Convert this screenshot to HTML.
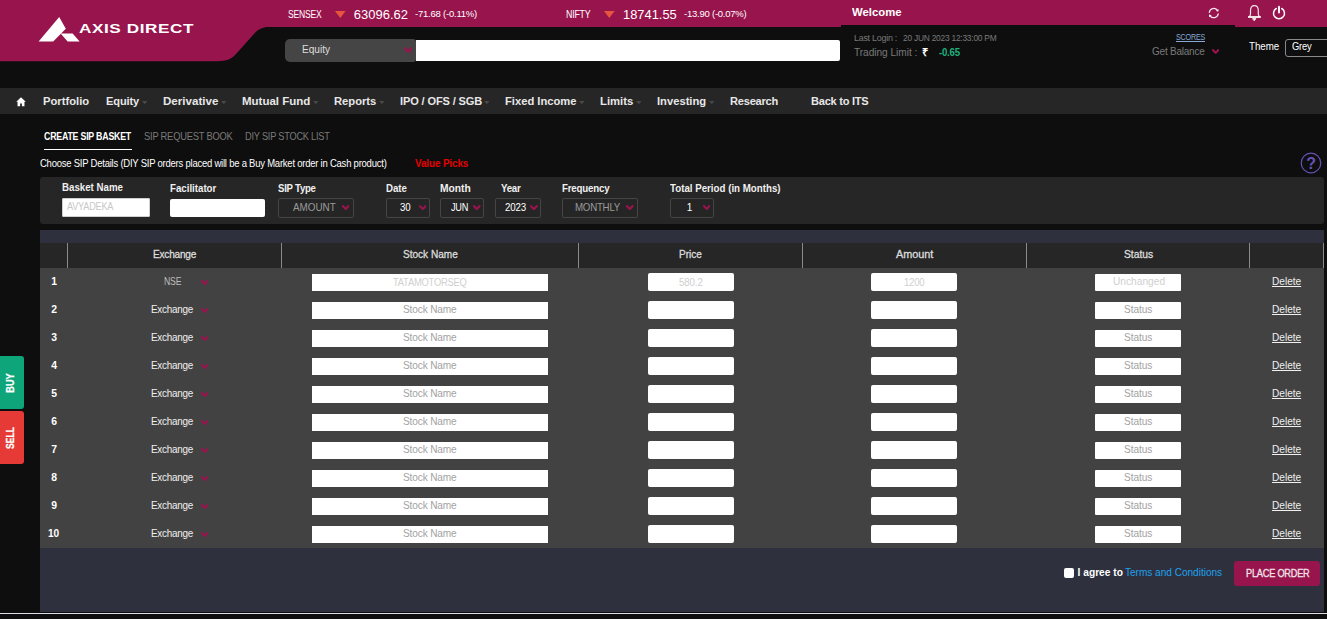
<!DOCTYPE html>
<html lang="en"><head><meta charset="utf-8"><title>Axis Direct - Create SIP Basket</title>
<style>
html,body{margin:0;padding:0;}
body{width:1327px;height:619px;overflow:hidden;background:#0e0e0e;font-family:"Liberation Sans", sans-serif;position:relative;}
.b{position:absolute;display:block;}
.t{position:absolute;white-space:nowrap;line-height:1;transform-origin:0 50%;}
</style></head>
<body>
<div class="b" style="left:0px;top:0px;width:1327.00px;height:27.00px;background:#97144d;"></div>
<div class="b" style="left:841px;top:25px;width:394.00px;height:2.00px;background:#0e0e0e;"></div>
<svg class="b" style="left:0;top:0" width="290" height="62" viewBox="0 0 290 62"><path d="M0 0 H290 V26.6 H276 C265 26.6 260.5 27.6 255.3 32.6 L236 54 C231.5 59 227 61.2 217 61.2 H0 Z" fill="#97144d"/></svg>
<svg class="b" style="left:38px;top:16px" width="43" height="27" viewBox="0 0 43 27"><path d="M21.2 1 L27.8 12.8 L15.2 25.6 L0.6 25.6 Z" fill="#fff"/><path d="M22.6 17.6 L34.6 17.6 L41.6 25.6 L29.6 25.6 Z" fill="#fff"/></svg>
<div class="b" style="left:415.5px;top:39.7px;width:424.80px;height:21.40px;background:#fff;border-radius:0 2px 2px 0;"></div>
<div class="b" style="left:285px;top:39px;width:130.80px;height:22.60px;background:#454545;border-radius:5px 3px 3px 5px;"></div>
<svg class="b" style="left:403.6px;top:46.89px" width="8.90" height="6.23" viewBox="0 0 10 7"><path d="M1.3 1.5 L5 5.3 L8.7 1.5" fill="none" stroke="#97144d" stroke-width="2.9" stroke-linecap="round" stroke-linejoin="round"/></svg>
<svg class="b" style="left:335px;top:10.6px" width="10.6" height="7" viewBox="0 0 10.6 7"><path d="M0 0 H10.6 L5.3 7 Z" fill="#e8553f"/></svg>
<svg class="b" style="left:604.2px;top:10.6px" width="10.6" height="7" viewBox="0 0 10.6 7"><path d="M0 0 H10.6 L5.3 7 Z" fill="#e8553f"/></svg>
<svg class="b" style="left:1206px;top:5px" width="16" height="16" viewBox="0 0 16 16" fill="none" stroke="#f6e4ec" stroke-width="1.25" stroke-linecap="round"><path d="M3.3 7.3 A4.5 4.5 0 0 1 11.4 5.4"/><path d="M12.2 8.9 A4.5 4.5 0 0 1 4.1 10.8"/><path d="M12.5 3.9 L12.4 6.6 L9.9 5.9 Z" fill="#fff" stroke="none"/><path d="M3.0 12.3 L3.1 9.6 L5.6 10.3 Z" fill="#fff" stroke="none"/></svg>
<svg class="b" style="left:1246px;top:3px" width="17" height="19" viewBox="0 0 17 19" fill="none" stroke="#f6e4ec" stroke-width="1.2" stroke-linejoin="round" stroke-linecap="round"><path d="M8.4 2.6 C5.6 2.6 4.5 4.9 4.5 7.6 V11.2 C4.5 12.4 3.6 13.3 2.6 14 H14.2 C13.200 13.3 12.3 12.4 12.3 11.2 V7.6 C12.3 4.9 11.200 2.6 8.4 2.6 Z"/><path d="M2.6 14 H14.2" stroke="#fff" stroke-width="1.5"/><path d="M6.9 15.6 H9.9 L8.4 17.5 Z" fill="#fff" stroke="#fff" stroke-width="0.8"/></svg>
<svg class="b" style="left:1271px;top:4px" width="17" height="17" viewBox="0 0 17 17" fill="none" stroke="#fff" stroke-linecap="round"><path d="M5.3 4.5 A5.5 5.5 0 1 0 10.7 4.5" stroke-width="1.5"/><path d="M8 2.6 V8.6" stroke-width="1.9"/></svg>
<div class="b" style="left:1175.8px;top:41px;width:29.40px;height:1.00px;background:#86a9d6;"></div>
<svg class="b" style="left:1212px;top:49.05px" width="7.30" height="5.11" viewBox="0 0 10 7"><path d="M1.3 1.5 L5 5.3 L8.7 1.5" fill="none" stroke="#97144d" stroke-width="2.9" stroke-linecap="round" stroke-linejoin="round"/></svg>
<div class="b" style="left:1285px;top:39px;width:50.00px;height:17.80px;background:transparent;border:1px solid #8a8a8a;border-radius:3px;box-sizing:border-box;"></div>
<div class="b" style="left:0px;top:87.6px;width:1327.00px;height:26.40px;background:#262626;"></div>
<svg class="b" style="left:16px;top:97.4px" width="10" height="9.4" viewBox="0 0 20 19"><path d="M10 0.6 L0.4 9.8 H3 V18.5 H8.2 V13 H11.800 V18.5 H17 V9.8 H19.6 Z" fill="#fff"/></svg>
<svg class="b" style="left:141.5px;top:100.6px" width="5.6" height="3.2" viewBox="0 0 5.6 3.2"><path d="M0 0 H5.6 L2.8 3.2 Z" fill="#484848"/></svg>
<svg class="b" style="left:220.5px;top:100.6px" width="5.6" height="3.2" viewBox="0 0 5.6 3.2"><path d="M0 0 H5.6 L2.8 3.2 Z" fill="#484848"/></svg>
<svg class="b" style="left:312.5px;top:100.6px" width="5.6" height="3.2" viewBox="0 0 5.6 3.2"><path d="M0 0 H5.6 L2.8 3.2 Z" fill="#484848"/></svg>
<svg class="b" style="left:378.5px;top:100.6px" width="5.6" height="3.2" viewBox="0 0 5.6 3.2"><path d="M0 0 H5.6 L2.8 3.2 Z" fill="#484848"/></svg>
<svg class="b" style="left:483.5px;top:100.6px" width="5.6" height="3.2" viewBox="0 0 5.6 3.2"><path d="M0 0 H5.6 L2.8 3.2 Z" fill="#484848"/></svg>
<svg class="b" style="left:578.5px;top:100.6px" width="5.6" height="3.2" viewBox="0 0 5.6 3.2"><path d="M0 0 H5.6 L2.8 3.2 Z" fill="#484848"/></svg>
<svg class="b" style="left:635.5px;top:100.6px" width="5.6" height="3.2" viewBox="0 0 5.6 3.2"><path d="M0 0 H5.6 L2.8 3.2 Z" fill="#484848"/></svg>
<svg class="b" style="left:708.5px;top:100.6px" width="5.6" height="3.2" viewBox="0 0 5.6 3.2"><path d="M0 0 H5.6 L2.8 3.2 Z" fill="#484848"/></svg>
<div class="b" style="left:44px;top:148.6px;width:88.00px;height:1.40px;background:#fff;"></div>
<svg class="b" style="left:1299.5px;top:152px" width="22" height="22" viewBox="0 0 22 22"><circle cx="11" cy="11" r="9.800" fill="none" stroke="#6553b8" stroke-width="1.2"/></svg>
<div class="b" style="left:40.3px;top:177.2px;width:1283.30px;height:46.90px;background:#262626;border-radius:3px;"></div>
<div class="b" style="left:62.3px;top:197.5px;width:87.30px;height:19.10px;background:#fff;border-radius:2px;box-shadow:inset 0 0 0 1px #d0d0d0;"></div>
<div class="b" style="left:170.4px;top:198.6px;width:95.00px;height:18.80px;background:#fff;border-radius:2px;"></div>
<div class="b" style="left:278px;top:198.4px;width:75.60px;height:19.40px;background:#252525;border:1px solid #454545;border-radius:2px;box-sizing:border-box;"></div>
<svg class="b" style="left:341.7px;top:204.97px" width="7.50" height="5.25" viewBox="0 0 10 7"><path d="M1.3 1.5 L5 5.3 L8.7 1.5" fill="none" stroke="#97144d" stroke-width="2.9" stroke-linecap="round" stroke-linejoin="round"/></svg>
<div class="b" style="left:386.2px;top:198.4px;width:43.60px;height:19.40px;background:#252525;border:1px solid #454545;border-radius:2px;box-sizing:border-box;"></div>
<svg class="b" style="left:418.8px;top:204.91px" width="7.70" height="5.39" viewBox="0 0 10 7"><path d="M1.3 1.5 L5 5.3 L8.7 1.5" fill="none" stroke="#97144d" stroke-width="2.9" stroke-linecap="round" stroke-linejoin="round"/></svg>
<div class="b" style="left:440.2px;top:198.4px;width:43.50px;height:19.40px;background:#252525;border:1px solid #454545;border-radius:2px;box-sizing:border-box;"></div>
<svg class="b" style="left:473px;top:204.97px" width="7.50" height="5.25" viewBox="0 0 10 7"><path d="M1.3 1.5 L5 5.3 L8.7 1.5" fill="none" stroke="#97144d" stroke-width="2.9" stroke-linecap="round" stroke-linejoin="round"/></svg>
<div class="b" style="left:495.4px;top:198.4px;width:45.60px;height:19.40px;background:#252525;border:1px solid #454545;border-radius:2px;box-sizing:border-box;"></div>
<svg class="b" style="left:529.8px;top:204.87px" width="7.80" height="5.46" viewBox="0 0 10 7"><path d="M1.3 1.5 L5 5.3 L8.7 1.5" fill="none" stroke="#97144d" stroke-width="2.9" stroke-linecap="round" stroke-linejoin="round"/></svg>
<div class="b" style="left:562px;top:198.4px;width:76.00px;height:19.40px;background:#252525;border:1px solid #454545;border-radius:2px;box-sizing:border-box;"></div>
<svg class="b" style="left:626px;top:204.97px" width="7.50" height="5.25" viewBox="0 0 10 7"><path d="M1.3 1.5 L5 5.3 L8.7 1.5" fill="none" stroke="#97144d" stroke-width="2.9" stroke-linecap="round" stroke-linejoin="round"/></svg>
<div class="b" style="left:670px;top:198.4px;width:43.60px;height:19.40px;background:#252525;border:1px solid #454545;border-radius:2px;box-sizing:border-box;"></div>
<svg class="b" style="left:703px;top:205.01px" width="7.40" height="5.18" viewBox="0 0 10 7"><path d="M1.3 1.5 L5 5.3 L8.7 1.5" fill="none" stroke="#97144d" stroke-width="2.9" stroke-linecap="round" stroke-linejoin="round"/></svg>
<div class="b" style="left:40.3px;top:229.5px;width:1283.30px;height:13.50px;background:#2e303e;"></div>
<div class="b" style="left:40.3px;top:242.8px;width:1283.30px;height:25.20px;background:#262626;"></div>
<div class="b" style="left:67px;top:242.8px;width:1.00px;height:25.20px;background:#8a8a8a;"></div>
<div class="b" style="left:281px;top:242.8px;width:1.00px;height:25.20px;background:#8a8a8a;"></div>
<div class="b" style="left:578px;top:242.8px;width:1.00px;height:25.20px;background:#8a8a8a;"></div>
<div class="b" style="left:802px;top:242.8px;width:1.00px;height:25.20px;background:#8a8a8a;"></div>
<div class="b" style="left:1026px;top:242.8px;width:1.00px;height:25.20px;background:#8a8a8a;"></div>
<div class="b" style="left:1249px;top:242.8px;width:1.00px;height:25.20px;background:#8a8a8a;"></div>
<div class="b" style="left:1323px;top:242.8px;width:1.00px;height:25.20px;background:#8a8a8a;"></div>
<div class="b" style="left:40.3px;top:268px;width:1283.30px;height:280.00px;background:#424242;"></div>
<div class="b" style="left:40.3px;top:548px;width:1283.30px;height:64.00px;background:#2e303e;"></div>
<div class="b" style="left:311.9px;top:274.2px;width:236.30px;height:16.80px;background:#fff;border-radius:0px;"></div>
<div class="b" style="left:647.7px;top:273.4px;width:86.60px;height:17.60px;background:#fff;border-radius:2px;"></div>
<div class="b" style="left:871px;top:273.4px;width:86.40px;height:17.60px;background:#fff;border-radius:2px;"></div>
<div class="b" style="left:1095px;top:274.0px;width:86.40px;height:17.00px;background:#fff;border-radius:1px;"></div>
<svg class="b" style="left:200.6px;top:279.51px" width="7.40" height="5.18" viewBox="0 0 10 7"><path d="M1.3 1.5 L5 5.3 L8.7 1.5" fill="none" stroke="#97144d" stroke-width="2.9" stroke-linecap="round" stroke-linejoin="round"/></svg>
<div class="b" style="left:311.9px;top:302.2px;width:236.30px;height:16.80px;background:#fff;border-radius:0px;"></div>
<div class="b" style="left:647.7px;top:301.4px;width:86.60px;height:17.60px;background:#fff;border-radius:2px;"></div>
<div class="b" style="left:871px;top:301.4px;width:86.40px;height:17.60px;background:#fff;border-radius:2px;"></div>
<div class="b" style="left:1095px;top:302.0px;width:86.40px;height:17.00px;background:#fff;border-radius:1px;"></div>
<svg class="b" style="left:200.6px;top:307.51px" width="7.40" height="5.18" viewBox="0 0 10 7"><path d="M1.3 1.5 L5 5.3 L8.7 1.5" fill="none" stroke="#97144d" stroke-width="2.9" stroke-linecap="round" stroke-linejoin="round"/></svg>
<div class="b" style="left:311.9px;top:330.2px;width:236.30px;height:16.80px;background:#fff;border-radius:0px;"></div>
<div class="b" style="left:647.7px;top:329.4px;width:86.60px;height:17.60px;background:#fff;border-radius:2px;"></div>
<div class="b" style="left:871px;top:329.4px;width:86.40px;height:17.60px;background:#fff;border-radius:2px;"></div>
<div class="b" style="left:1095px;top:330.0px;width:86.40px;height:17.00px;background:#fff;border-radius:1px;"></div>
<svg class="b" style="left:200.6px;top:335.51px" width="7.40" height="5.18" viewBox="0 0 10 7"><path d="M1.3 1.5 L5 5.3 L8.7 1.5" fill="none" stroke="#97144d" stroke-width="2.9" stroke-linecap="round" stroke-linejoin="round"/></svg>
<div class="b" style="left:311.9px;top:358.2px;width:236.30px;height:16.80px;background:#fff;border-radius:0px;"></div>
<div class="b" style="left:647.7px;top:357.4px;width:86.60px;height:17.60px;background:#fff;border-radius:2px;"></div>
<div class="b" style="left:871px;top:357.4px;width:86.40px;height:17.60px;background:#fff;border-radius:2px;"></div>
<div class="b" style="left:1095px;top:358.0px;width:86.40px;height:17.00px;background:#fff;border-radius:1px;"></div>
<svg class="b" style="left:200.6px;top:363.51px" width="7.40" height="5.18" viewBox="0 0 10 7"><path d="M1.3 1.5 L5 5.3 L8.7 1.5" fill="none" stroke="#97144d" stroke-width="2.9" stroke-linecap="round" stroke-linejoin="round"/></svg>
<div class="b" style="left:311.9px;top:386.2px;width:236.30px;height:16.80px;background:#fff;border-radius:0px;"></div>
<div class="b" style="left:647.7px;top:385.4px;width:86.60px;height:17.60px;background:#fff;border-radius:2px;"></div>
<div class="b" style="left:871px;top:385.4px;width:86.40px;height:17.60px;background:#fff;border-radius:2px;"></div>
<div class="b" style="left:1095px;top:386.0px;width:86.40px;height:17.00px;background:#fff;border-radius:1px;"></div>
<svg class="b" style="left:200.6px;top:391.51px" width="7.40" height="5.18" viewBox="0 0 10 7"><path d="M1.3 1.5 L5 5.3 L8.7 1.5" fill="none" stroke="#97144d" stroke-width="2.9" stroke-linecap="round" stroke-linejoin="round"/></svg>
<div class="b" style="left:311.9px;top:414.2px;width:236.30px;height:16.80px;background:#fff;border-radius:0px;"></div>
<div class="b" style="left:647.7px;top:413.4px;width:86.60px;height:17.60px;background:#fff;border-radius:2px;"></div>
<div class="b" style="left:871px;top:413.4px;width:86.40px;height:17.60px;background:#fff;border-radius:2px;"></div>
<div class="b" style="left:1095px;top:414.0px;width:86.40px;height:17.00px;background:#fff;border-radius:1px;"></div>
<svg class="b" style="left:200.6px;top:419.51px" width="7.40" height="5.18" viewBox="0 0 10 7"><path d="M1.3 1.5 L5 5.3 L8.7 1.5" fill="none" stroke="#97144d" stroke-width="2.9" stroke-linecap="round" stroke-linejoin="round"/></svg>
<div class="b" style="left:311.9px;top:442.2px;width:236.30px;height:16.80px;background:#fff;border-radius:0px;"></div>
<div class="b" style="left:647.7px;top:441.4px;width:86.60px;height:17.60px;background:#fff;border-radius:2px;"></div>
<div class="b" style="left:871px;top:441.4px;width:86.40px;height:17.60px;background:#fff;border-radius:2px;"></div>
<div class="b" style="left:1095px;top:442.0px;width:86.40px;height:17.00px;background:#fff;border-radius:1px;"></div>
<svg class="b" style="left:200.6px;top:447.51px" width="7.40" height="5.18" viewBox="0 0 10 7"><path d="M1.3 1.5 L5 5.3 L8.7 1.5" fill="none" stroke="#97144d" stroke-width="2.9" stroke-linecap="round" stroke-linejoin="round"/></svg>
<div class="b" style="left:311.9px;top:470.2px;width:236.30px;height:16.80px;background:#fff;border-radius:0px;"></div>
<div class="b" style="left:647.7px;top:469.4px;width:86.60px;height:17.60px;background:#fff;border-radius:2px;"></div>
<div class="b" style="left:871px;top:469.4px;width:86.40px;height:17.60px;background:#fff;border-radius:2px;"></div>
<div class="b" style="left:1095px;top:470.0px;width:86.40px;height:17.00px;background:#fff;border-radius:1px;"></div>
<svg class="b" style="left:200.6px;top:475.51px" width="7.40" height="5.18" viewBox="0 0 10 7"><path d="M1.3 1.5 L5 5.3 L8.7 1.5" fill="none" stroke="#97144d" stroke-width="2.9" stroke-linecap="round" stroke-linejoin="round"/></svg>
<div class="b" style="left:311.9px;top:498.2px;width:236.30px;height:16.80px;background:#fff;border-radius:0px;"></div>
<div class="b" style="left:647.7px;top:497.4px;width:86.60px;height:17.60px;background:#fff;border-radius:2px;"></div>
<div class="b" style="left:871px;top:497.4px;width:86.40px;height:17.60px;background:#fff;border-radius:2px;"></div>
<div class="b" style="left:1095px;top:498.0px;width:86.40px;height:17.00px;background:#fff;border-radius:1px;"></div>
<svg class="b" style="left:200.6px;top:503.51px" width="7.40" height="5.18" viewBox="0 0 10 7"><path d="M1.3 1.5 L5 5.3 L8.7 1.5" fill="none" stroke="#97144d" stroke-width="2.9" stroke-linecap="round" stroke-linejoin="round"/></svg>
<div class="b" style="left:311.9px;top:526.1999999999999px;width:236.30px;height:16.80px;background:#fff;border-radius:0px;"></div>
<div class="b" style="left:647.7px;top:525.4px;width:86.60px;height:17.60px;background:#fff;border-radius:2px;"></div>
<div class="b" style="left:871px;top:525.4px;width:86.40px;height:17.60px;background:#fff;border-radius:2px;"></div>
<div class="b" style="left:1095px;top:526.0px;width:86.40px;height:17.00px;background:#fff;border-radius:1px;"></div>
<svg class="b" style="left:200.6px;top:531.51px" width="7.40" height="5.18" viewBox="0 0 10 7"><path d="M1.3 1.5 L5 5.3 L8.7 1.5" fill="none" stroke="#97144d" stroke-width="2.9" stroke-linecap="round" stroke-linejoin="round"/></svg>
<div class="b" style="left:0px;top:356.3px;width:24.40px;height:52.60px;background:#0ea57a;border-radius:0 3px 3px 0;"></div>
<div class="b" style="left:0px;top:411.4px;width:24.40px;height:52.60px;background:#e53a35;border-radius:0 3px 3px 0;"></div>
<div class="b" style="left:1064.4px;top:568.3px;width:9.60px;height:9.70px;background:#fff;border-radius:2px;"></div>
<div class="b" style="left:1234.1px;top:561px;width:85.90px;height:25.00px;background:#97144d;border-radius:3px;"></div>
<div class="b" style="left:0px;top:612.6px;width:1327.00px;height:1.60px;background:#dcdce6;"></div>
<span class="t" style="left:287.60px;top:10.00px;font-size:10px;color:#fff;letter-spacing:-0.250px;transform:scaleX(0.8575);">SENSEX</span>
<span class="t" style="left:353.80px;top:8.00px;font-size:13px;color:#fff;">63096.62</span>
<span class="t" style="left:415.00px;top:9.00px;font-size:9.8px;color:#fff;letter-spacing:-0.226px;transform:scaleX(0.9700);">-71.68 (-0.11%)</span>
<span class="t" style="left:565.60px;top:10.00px;font-size:10px;color:#fff;letter-spacing:-0.250px;transform:scaleX(0.8825);">NIFTY</span>
<span class="t" style="left:623.30px;top:8.00px;font-size:13px;color:#fff;transform:scaleX(0.9909);">18741.55</span>
<span class="t" style="left:683.50px;top:9.00px;font-size:9.8px;color:#fff;letter-spacing:-0.241px;transform:scaleX(0.9700);">-13.90 (-0.07%)</span>
<span class="t" style="left:851.90px;top:7.00px;font-size:11.5px;color:#fff;font-weight:700;transform:scaleX(0.9863);">Welcome</span>
<span class="t" style="left:301.60px;top:45.00px;font-size:10px;color:#ddd;transform:scaleX(1.0110);">Equity</span>
<span class="t" style="left:853.90px;top:34.00px;font-size:9.2px;color:#7a7a7a;letter-spacing:-0.250px;transform:scaleX(0.9683);">Last Login :</span>
<span class="t" style="left:902.90px;top:34.00px;font-size:9.2px;color:#7a7a7a;letter-spacing:-0.250px;transform:scaleX(0.9116);">20 JUN 2023 12:33:00 PM</span>
<span class="t" style="left:853.90px;top:48.00px;font-size:10.4px;color:#7a7a7a;letter-spacing:-0.016px;transform:scaleX(0.9700);">Trading Limit :</span>
<span class="t" style="left:921.50px;top:47.00px;font-size:11px;color:#fff;font-weight:700;font-family:"DejaVu Sans",sans-serif;">₹</span>
<span class="t" style="left:938.50px;top:48.00px;font-size:10px;color:#1db07c;font-weight:700;letter-spacing:-0.250px;transform:scaleX(0.9671);">-0.65</span>
<span class="t" style="left:1175.80px;top:33.00px;font-size:9px;color:#86a9d6;letter-spacing:-0.250px;transform:scaleX(0.7999);">SCORES</span>
<span class="t" style="left:1152.20px;top:47.00px;font-size:10.3px;color:#7a7a7a;letter-spacing:-0.230px;transform:scaleX(0.9700);">Get Balance</span>
<span class="t" style="left:1249.30px;top:42.00px;font-size:10px;color:#fff;transform:scaleX(0.9727);">Theme</span>
<span class="t" style="left:1292.40px;top:42.00px;font-size:10px;color:#fff;letter-spacing:-0.250px;transform:scaleX(0.9369);">Grey</span>
<span class="t" style="left:42.80px;top:96.00px;font-size:11.4px;color:#e8e8e8;font-weight:700;transform:scaleX(0.9859);">Portfolio</span>
<span class="t" style="left:105.50px;top:96.00px;font-size:11.4px;color:#e8e8e8;font-weight:700;letter-spacing:-0.125px;transform:scaleX(0.9700);">Equity</span>
<span class="t" style="left:163.00px;top:96.00px;font-size:11.4px;color:#e8e8e8;font-weight:700;transform:scaleX(1.0162);">Derivative</span>
<span class="t" style="left:241.80px;top:96.00px;font-size:11.4px;color:#e8e8e8;font-weight:700;transform:scaleX(1.0098);">Mutual Fund</span>
<span class="t" style="left:334.00px;top:96.00px;font-size:11.4px;color:#e8e8e8;font-weight:700;transform:scaleX(0.9835);">Reports</span>
<span class="t" style="left:399.50px;top:96.00px;font-size:11.4px;color:#e8e8e8;font-weight:700;letter-spacing:-0.139px;transform:scaleX(0.9700);">IPO / OFS / SGB</span>
<span class="t" style="left:505.30px;top:96.00px;font-size:11.4px;color:#e8e8e8;font-weight:700;transform:scaleX(0.9826);">Fixed Income</span>
<span class="t" style="left:600.40px;top:96.00px;font-size:11.4px;color:#e8e8e8;font-weight:700;transform:scaleX(0.9907);">Limits</span>
<span class="t" style="left:657.00px;top:96.00px;font-size:11.4px;color:#e8e8e8;font-weight:700;transform:scaleX(0.9832);">Investing</span>
<span class="t" style="left:730.00px;top:96.00px;font-size:11.4px;color:#e8e8e8;font-weight:700;letter-spacing:-0.220px;transform:scaleX(0.9700);">Research</span>
<span class="t" style="left:811.40px;top:96.00px;font-size:11.4px;color:#e8e8e8;font-weight:700;letter-spacing:-0.250px;transform:scaleX(0.9694);">Back to ITS</span>
<span class="t" style="left:44.00px;top:131.00px;font-size:10.6px;color:#fff;font-weight:700;letter-spacing:-0.250px;transform:scaleX(0.8298);">CREATE SIP BASKET</span>
<span class="t" style="left:144.30px;top:131.00px;font-size:10.6px;color:#7a7a7a;letter-spacing:-0.250px;transform:scaleX(0.8815);">SIP REQUEST BOOK</span>
<span class="t" style="left:245.30px;top:131.00px;font-size:10.6px;color:#7a7a7a;letter-spacing:-0.250px;transform:scaleX(0.8699);">DIY SIP STOCK LIST</span>
<span class="t" style="left:40.30px;top:159.00px;font-size:10.4px;color:#fff;letter-spacing:-0.250px;transform:scaleX(0.9131);">Choose SIP Details (DIY SIP orders placed will be a Buy Market order in Cash product)</span>
<span class="t" style="left:415.00px;top:159.00px;font-size:10.2px;color:#e60000;font-weight:700;letter-spacing:-0.115px;transform:scaleX(0.9700);">Value Picks</span>
<span class="t" style="left:62.20px;top:183.00px;font-size:10px;color:#f0f0f0;font-weight:700;transform:scaleX(0.9707);">Basket Name</span>
<span class="t" style="left:170.00px;top:184.00px;font-size:10px;color:#f0f0f0;font-weight:700;letter-spacing:-0.006px;transform:scaleX(0.9700);">Facilitator</span>
<span class="t" style="left:277.90px;top:184.00px;font-size:10px;color:#f0f0f0;font-weight:700;letter-spacing:-0.250px;transform:scaleX(0.9581);">SIP Type</span>
<span class="t" style="left:386.20px;top:184.00px;font-size:10px;color:#f0f0f0;font-weight:700;letter-spacing:-0.017px;transform:scaleX(0.9700);">Date</span>
<span class="t" style="left:440.40px;top:184.00px;font-size:10px;color:#f0f0f0;font-weight:700;transform:scaleX(1.0242);">Month</span>
<span class="t" style="left:501.10px;top:184.00px;font-size:10px;color:#f0f0f0;font-weight:700;letter-spacing:-0.242px;transform:scaleX(0.9700);">Year</span>
<span class="t" style="left:562.00px;top:184.00px;font-size:10px;color:#f0f0f0;font-weight:700;letter-spacing:-0.191px;transform:scaleX(0.9700);">Frequency</span>
<span class="t" style="left:670.30px;top:184.00px;font-size:10px;color:#f0f0f0;font-weight:700;transform:scaleX(0.9721);">Total Period (in Months)</span>
<span class="t" style="left:67.00px;top:202.00px;font-size:10px;color:#c8c8c8;letter-spacing:-0.250px;transform:scaleX(0.9156);">AVYADEKA</span>
<span class="t" style="left:292.50px;top:203.00px;font-size:10.2px;color:#9a9a9a;letter-spacing:-0.021px;transform:scaleX(0.9700);">AMOUNT</span>
<span class="t" style="left:400.00px;top:203.00px;font-size:10px;color:#fff;letter-spacing:-0.221px;transform:scaleX(0.9700);">30</span>
<span class="t" style="left:451.40px;top:203.00px;font-size:10px;color:#fff;letter-spacing:-0.250px;transform:scaleX(0.9187);">JUN</span>
<span class="t" style="left:504.90px;top:203.00px;font-size:10px;color:#fff;letter-spacing:-0.139px;transform:scaleX(0.9700);">2023</span>
<span class="t" style="left:574.80px;top:203.00px;font-size:10.2px;color:#9a9a9a;letter-spacing:-0.250px;transform:scaleX(0.9528);">MONTHLY</span>
<span class="t" style="left:686.80px;top:203.00px;font-size:10px;color:#fff;">1</span>
<span class="t" style="left:153.00px;top:250.00px;font-size:10.4px;color:#dcdcdc;letter-spacing:-0.227px;transform:scaleX(0.9700);-webkit-text-stroke:0.3px;">Exchange</span>
<span class="t" style="left:402.50px;top:250.00px;font-size:10.4px;color:#dcdcdc;letter-spacing:-0.012px;transform:scaleX(0.9700);-webkit-text-stroke:0.3px;">Stock Name</span>
<span class="t" style="left:679.30px;top:250.00px;font-size:10.4px;color:#dcdcdc;letter-spacing:-0.020px;transform:scaleX(0.9700);-webkit-text-stroke:0.3px;">Price</span>
<span class="t" style="left:895.50px;top:250.00px;font-size:10.4px;color:#dcdcdc;transform:scaleX(1.0439);-webkit-text-stroke:0.3px;">Amount</span>
<span class="t" style="left:1124.00px;top:250.00px;font-size:10.4px;color:#dcdcdc;transform:scaleX(0.9911);-webkit-text-stroke:0.3px;">Status</span>
<span class="t" style="left:51.30px;top:277.00px;font-size:10.4px;color:#fff;font-weight:700;">1</span>
<span class="t" style="left:163.50px;top:277.00px;font-size:10.4px;color:#bdbdbd;letter-spacing:-0.250px;transform:scaleX(0.8360);">NSE</span>
<span class="t" style="left:393.00px;top:278.00px;font-size:10px;color:#cfcfcf;letter-spacing:-0.250px;transform:scaleX(0.9372);">TATAMOTORSEQ</span>
<span class="t" style="left:678.80px;top:278.00px;font-size:10px;color:#cfcfcf;letter-spacing:-0.129px;transform:scaleX(0.9700);">580.2</span>
<span class="t" style="left:904.00px;top:278.00px;font-size:10px;color:#cfcfcf;letter-spacing:-0.250px;transform:scaleX(0.9574);">1200</span>
<span class="t" style="left:1112.50px;top:277.00px;font-size:10px;color:#cfcfcf;transform:scaleX(1.0180);">Unchanged</span>
<span class="t" style="left:1271.80px;top:277.00px;font-size:10.4px;color:#f0f0f0;transform:scaleX(0.9717);text-decoration:underline;">Delete</span>
<span class="t" style="left:51.30px;top:305.00px;font-size:10.4px;color:#fff;font-weight:700;">2</span>
<span class="t" style="left:151.30px;top:305.00px;font-size:10.4px;color:#f0f0f0;letter-spacing:-0.250px;transform:scaleX(0.9511);">Exchange</span>
<span class="t" style="left:403.30px;top:305.00px;font-size:10.4px;color:#a2a2a2;letter-spacing:-0.138px;transform:scaleX(0.9700);">Stock Name</span>
<span class="t" style="left:1124.30px;top:305.00px;font-size:10.4px;color:#a2a2a2;letter-spacing:-0.038px;transform:scaleX(0.9700);">Status</span>
<span class="t" style="left:1271.80px;top:305.00px;font-size:10.4px;color:#f0f0f0;transform:scaleX(0.9717);text-decoration:underline;">Delete</span>
<span class="t" style="left:51.30px;top:333.00px;font-size:10.4px;color:#fff;font-weight:700;">3</span>
<span class="t" style="left:151.30px;top:333.00px;font-size:10.4px;color:#f0f0f0;letter-spacing:-0.250px;transform:scaleX(0.9511);">Exchange</span>
<span class="t" style="left:403.30px;top:333.00px;font-size:10.4px;color:#a2a2a2;letter-spacing:-0.138px;transform:scaleX(0.9700);">Stock Name</span>
<span class="t" style="left:1124.30px;top:333.00px;font-size:10.4px;color:#a2a2a2;letter-spacing:-0.038px;transform:scaleX(0.9700);">Status</span>
<span class="t" style="left:1271.80px;top:333.00px;font-size:10.4px;color:#f0f0f0;transform:scaleX(0.9717);text-decoration:underline;">Delete</span>
<span class="t" style="left:51.30px;top:361.00px;font-size:10.4px;color:#fff;font-weight:700;">4</span>
<span class="t" style="left:151.30px;top:361.00px;font-size:10.4px;color:#f0f0f0;letter-spacing:-0.250px;transform:scaleX(0.9511);">Exchange</span>
<span class="t" style="left:403.30px;top:361.00px;font-size:10.4px;color:#a2a2a2;letter-spacing:-0.138px;transform:scaleX(0.9700);">Stock Name</span>
<span class="t" style="left:1124.30px;top:361.00px;font-size:10.4px;color:#a2a2a2;letter-spacing:-0.038px;transform:scaleX(0.9700);">Status</span>
<span class="t" style="left:1271.80px;top:361.00px;font-size:10.4px;color:#f0f0f0;transform:scaleX(0.9717);text-decoration:underline;">Delete</span>
<span class="t" style="left:51.30px;top:389.00px;font-size:10.4px;color:#fff;font-weight:700;">5</span>
<span class="t" style="left:151.30px;top:389.00px;font-size:10.4px;color:#f0f0f0;letter-spacing:-0.250px;transform:scaleX(0.9511);">Exchange</span>
<span class="t" style="left:403.30px;top:389.00px;font-size:10.4px;color:#a2a2a2;letter-spacing:-0.138px;transform:scaleX(0.9700);">Stock Name</span>
<span class="t" style="left:1124.30px;top:389.00px;font-size:10.4px;color:#a2a2a2;letter-spacing:-0.038px;transform:scaleX(0.9700);">Status</span>
<span class="t" style="left:1271.80px;top:389.00px;font-size:10.4px;color:#f0f0f0;transform:scaleX(0.9717);text-decoration:underline;">Delete</span>
<span class="t" style="left:51.30px;top:417.00px;font-size:10.4px;color:#fff;font-weight:700;">6</span>
<span class="t" style="left:151.30px;top:417.00px;font-size:10.4px;color:#f0f0f0;letter-spacing:-0.250px;transform:scaleX(0.9511);">Exchange</span>
<span class="t" style="left:403.30px;top:417.00px;font-size:10.4px;color:#a2a2a2;letter-spacing:-0.138px;transform:scaleX(0.9700);">Stock Name</span>
<span class="t" style="left:1124.30px;top:417.00px;font-size:10.4px;color:#a2a2a2;letter-spacing:-0.038px;transform:scaleX(0.9700);">Status</span>
<span class="t" style="left:1271.80px;top:417.00px;font-size:10.4px;color:#f0f0f0;transform:scaleX(0.9717);text-decoration:underline;">Delete</span>
<span class="t" style="left:51.30px;top:445.00px;font-size:10.4px;color:#fff;font-weight:700;">7</span>
<span class="t" style="left:151.30px;top:445.00px;font-size:10.4px;color:#f0f0f0;letter-spacing:-0.250px;transform:scaleX(0.9511);">Exchange</span>
<span class="t" style="left:403.30px;top:445.00px;font-size:10.4px;color:#a2a2a2;letter-spacing:-0.138px;transform:scaleX(0.9700);">Stock Name</span>
<span class="t" style="left:1124.30px;top:445.00px;font-size:10.4px;color:#a2a2a2;letter-spacing:-0.038px;transform:scaleX(0.9700);">Status</span>
<span class="t" style="left:1271.80px;top:445.00px;font-size:10.4px;color:#f0f0f0;transform:scaleX(0.9717);text-decoration:underline;">Delete</span>
<span class="t" style="left:51.30px;top:473.00px;font-size:10.4px;color:#fff;font-weight:700;">8</span>
<span class="t" style="left:151.30px;top:473.00px;font-size:10.4px;color:#f0f0f0;letter-spacing:-0.250px;transform:scaleX(0.9511);">Exchange</span>
<span class="t" style="left:403.30px;top:473.00px;font-size:10.4px;color:#a2a2a2;letter-spacing:-0.138px;transform:scaleX(0.9700);">Stock Name</span>
<span class="t" style="left:1124.30px;top:473.00px;font-size:10.4px;color:#a2a2a2;letter-spacing:-0.038px;transform:scaleX(0.9700);">Status</span>
<span class="t" style="left:1271.80px;top:473.00px;font-size:10.4px;color:#f0f0f0;transform:scaleX(0.9717);text-decoration:underline;">Delete</span>
<span class="t" style="left:51.30px;top:501.00px;font-size:10.4px;color:#fff;font-weight:700;">9</span>
<span class="t" style="left:151.30px;top:501.00px;font-size:10.4px;color:#f0f0f0;letter-spacing:-0.250px;transform:scaleX(0.9511);">Exchange</span>
<span class="t" style="left:403.30px;top:501.00px;font-size:10.4px;color:#a2a2a2;letter-spacing:-0.138px;transform:scaleX(0.9700);">Stock Name</span>
<span class="t" style="left:1124.30px;top:501.00px;font-size:10.4px;color:#a2a2a2;letter-spacing:-0.038px;transform:scaleX(0.9700);">Status</span>
<span class="t" style="left:1271.80px;top:501.00px;font-size:10.4px;color:#f0f0f0;transform:scaleX(0.9717);text-decoration:underline;">Delete</span>
<span class="t" style="left:48.40px;top:529.00px;font-size:10.4px;color:#fff;font-weight:700;letter-spacing:-0.026px;transform:scaleX(0.9700);">10</span>
<span class="t" style="left:151.30px;top:529.00px;font-size:10.4px;color:#f0f0f0;letter-spacing:-0.250px;transform:scaleX(0.9511);">Exchange</span>
<span class="t" style="left:403.30px;top:529.00px;font-size:10.4px;color:#a2a2a2;letter-spacing:-0.138px;transform:scaleX(0.9700);">Stock Name</span>
<span class="t" style="left:1124.30px;top:529.00px;font-size:10.4px;color:#a2a2a2;letter-spacing:-0.038px;transform:scaleX(0.9700);">Status</span>
<span class="t" style="left:1271.80px;top:529.00px;font-size:10.4px;color:#f0f0f0;transform:scaleX(0.9717);text-decoration:underline;">Delete</span>
<span class="t" style="left:1077.60px;top:568.00px;font-size:10.2px;color:#fff;font-weight:700;">I agree to</span>
<span class="t" style="left:1125.10px;top:568.00px;font-size:10.2px;color:#1ea1ec;transform:scaleX(0.9855);">Terms and Conditions</span>
<span class="t" style="left:1245.60px;top:569.00px;font-size:10.2px;color:#efe3e8;letter-spacing:-0.250px;transform:scaleX(0.9035);-webkit-text-stroke:0.3px;">PLACE ORDER</span>
<span class="t" style="left:79.0px;top:23.4px;font-size:12px;font-weight:700;color:#fff;transform-origin:0 50%;transform:scaleX(1.43);letter-spacing:0.4px;">AXIS DIRECT</span>
<span class="t" style="left:1306.2px;top:156px;font-size:16px;font-weight:700;color:#6553b8;">?</span>
<span class="t" style="left:11.2px;top:382.5px;font-size:10.4px;font-weight:700;color:#fff;-webkit-text-stroke:0.25px;transform-origin:50% 50%;transform:translate(-50%,-50%) rotate(-90deg) scaleX(0.88);">BUY</span>
<span class="t" style="left:11.2px;top:437.6px;font-size:10.4px;font-weight:700;color:#fff;-webkit-text-stroke:0.25px;transform-origin:50% 50%;transform:translate(-50%,-50%) rotate(-90deg) scaleX(0.83);">SELL</span>
</body></html>
